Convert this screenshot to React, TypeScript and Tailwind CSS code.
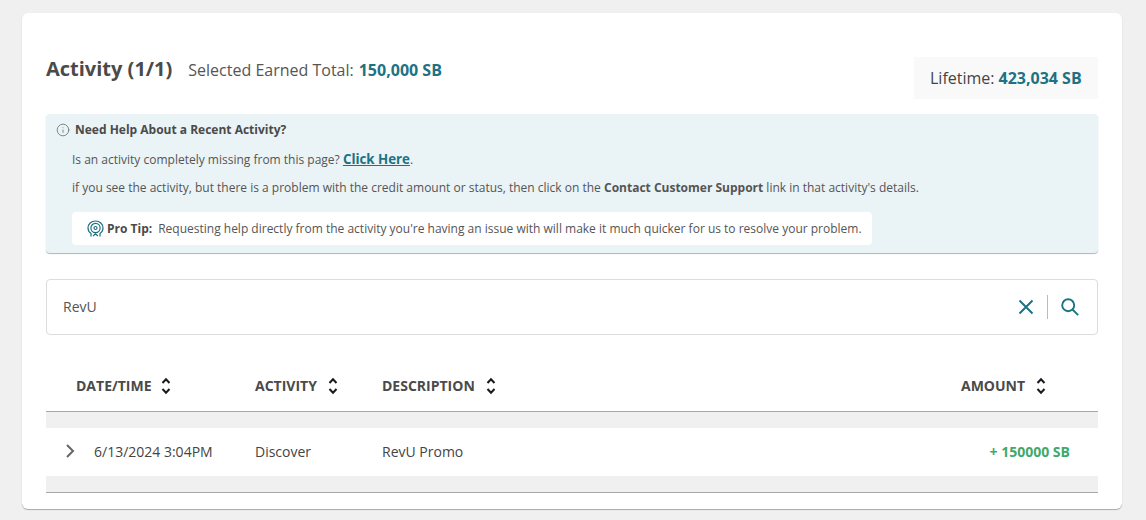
import React from 'react';
import { Info } from 'lucide-react';

const SortIcon: React.FC<{ gap: string }> = ({ gap }) => (
  <svg width="12" height="20" viewBox="0 0 12 20" fill="none" stroke="#1a1a1a" strokeWidth="2" className={gap}>
    <path d="M2.5 7 L6 3.2 L9.5 7" />
    <path d="M2.5 13 L6 16.8 L9.5 13" />
  </svg>
);

const ProTipIcon: React.FC = () => (
  <svg width="17" height="18" viewBox="0 0 17 18" fill="none" stroke="#1d6f80" strokeWidth="1.2">
    <path d="M4 16.5 L4 13.5 C2 12.2 1 10.2 1 8 C1 4 4.3 1 8.5 1 C12.7 1 16 4 16 8 C16 10.2 15 12.2 13 13.5 L13 16.5" />
    <circle cx="8.5" cy="8" r="4.6" />
    <circle cx="8.5" cy="8" r="1.5" />
    <path d="M6 16 L8.5 13.8 L11 16" />
  </svg>
);

export default function App() {
  return (
    <div className="min-h-[520px] bg-[#f0f0f0] pt-[13px] px-[22px] font-['Open_Sans',sans-serif] text-[#4a4a4a]">
      <div className="w-[1100px] h-[496px] bg-white rounded-md shadow-[0_1px_1px_rgba(0,0,0,0.3)] px-6 pt-11">
        <div className="flex items-start justify-between h-[57px]">
          <div className="flex items-baseline -mt-[2px]">
            <h1 className="text-[20px] leading-[27px] font-bold">Activity (1/1)</h1>
            <span className="ml-4 text-[16px] leading-[27px] text-[#555]">Selected Earned Total:</span>
            <span className="ml-[5px] text-[16px] leading-[27px] font-bold text-[#1d7283]">150,000 SB</span>
          </div>
          <div className="w-[184px] h-[42px] bg-[#f9f9f9] flex items-center pl-4 text-[16px]">
            <span className="text-[#444]">Lifetime:</span>
            <span className="ml-[4px] font-bold text-[#1d7283]">423,034 SB</span>
          </div>
        </div>

        <div className="h-[139px] bg-[#eaf3f6] rounded shadow-[0_1px_1px_rgba(0,0,0,0.3)] pt-[7px] pl-[11px] text-[12px]">
          <div className="flex items-center h-[18px]">
            <Info size={14} strokeWidth={1.3} className="text-[#666] -ml-px" />
            <span className="ml-[5px] font-bold text-[#4a4a4a]">Need Help About a Recent Activity?</span>
          </div>
          <div className="pl-[15px]">
            <p className="mt-3 leading-4 text-[#555]">
              Is an activity completely missing from this page?{' '}
              <a className="font-bold text-[13.3px] text-[#1d7283] underline">Click Here</a>.
            </p>
            <p className="mt-3 leading-4 text-[#555]">
              if you see the activity, but there is a problem with the credit amount or status, then click on the{' '}
              <span className="font-bold">Contact Customer Support</span> link in that activity's details.
            </p>
            <div className="mt-4 w-[800px] h-[33px] bg-white rounded flex items-center pl-[15px] text-[#555]">
              <ProTipIcon />
              <span className="ml-[3px] font-bold text-[#4a4a4a]">Pro Tip:</span>
              <span className="ml-[6px]">
                Requesting help directly from the activity you're having an issue with will make it much quicker for us to resolve your problem.
              </span>
            </div>
          </div>
        </div>

        <div className="mt-[26px] h-14 border border-[#dcdcdc] rounded flex items-center pl-4 pr-[18px] text-[14px] text-[#555]">
          <span className="flex-1 -mt-[2px]">RevU</span>
          <svg width="16" height="16" viewBox="0 0 16 16" fill="none" stroke="#1d7283" strokeWidth="2">
            <path d="M1.5 1.5 L14.5 14.5 M14.5 1.5 L1.5 14.5" />
          </svg>
          <div className="w-px h-6 bg-[#bbb] ml-[13px] mr-[13px]" />
          <svg width="18" height="18" viewBox="0 0 18 18" fill="none" stroke="#1d7283" strokeWidth="1.9">
            <circle cx="7.2" cy="7.2" r="6" />
            <path d="M11.5 11.5 L17.2 17.2" />
          </svg>
        </div>

        <div className="h-[77px] border-b border-[#a8a8a8] flex items-center pt-[26px] text-[14px] font-bold text-[#4a4a4a]">
          <div className="w-[209px] pl-[30px] flex items-center"><span className="-mt-[2px]">DATE/TIME</span><SortIcon gap="ml-[8px]" /></div>
          <div className="w-[127px] flex items-center"><span className="-mt-[2px]">ACTIVITY</span><SortIcon gap="ml-[10px]" /></div>
          <div className="flex-1 flex items-center"><span className="-mt-[2px]">DESCRIPTION</span><SortIcon gap="ml-[10px]" /></div>
          <div className="w-[137px] flex items-center"><span className="-mt-[2px]">AMOUNT</span><SortIcon gap="ml-[10px]" /></div>
        </div>
        <div className="h-4 bg-[#f0f0f0]" />
        <div className="h-12 flex items-center pb-px text-[14px] text-[#444]">
          <div className="w-[209px] flex items-center pl-[19px]">
            <svg width="10" height="14" viewBox="0 0 10 14" fill="none" stroke="#666" strokeWidth="2" className="-mt-[2px]">
              <path d="M2 1 L8 7 L2 13" />
            </svg>
            <span className="ml-[19px]">6/13/2024 3:04PM</span>
          </div>
          <div className="w-[127px]">Discover</div>
          <div className="flex-1">RevU Promo</div>
          <div className="pr-7 font-bold text-[#3fa96b]">+ 150000 SB</div>
        </div>
        <div className="h-[17px] bg-[#f0f0f0] border-b border-[#a8a8a8]" />
      </div>
    </div>
  );
}
